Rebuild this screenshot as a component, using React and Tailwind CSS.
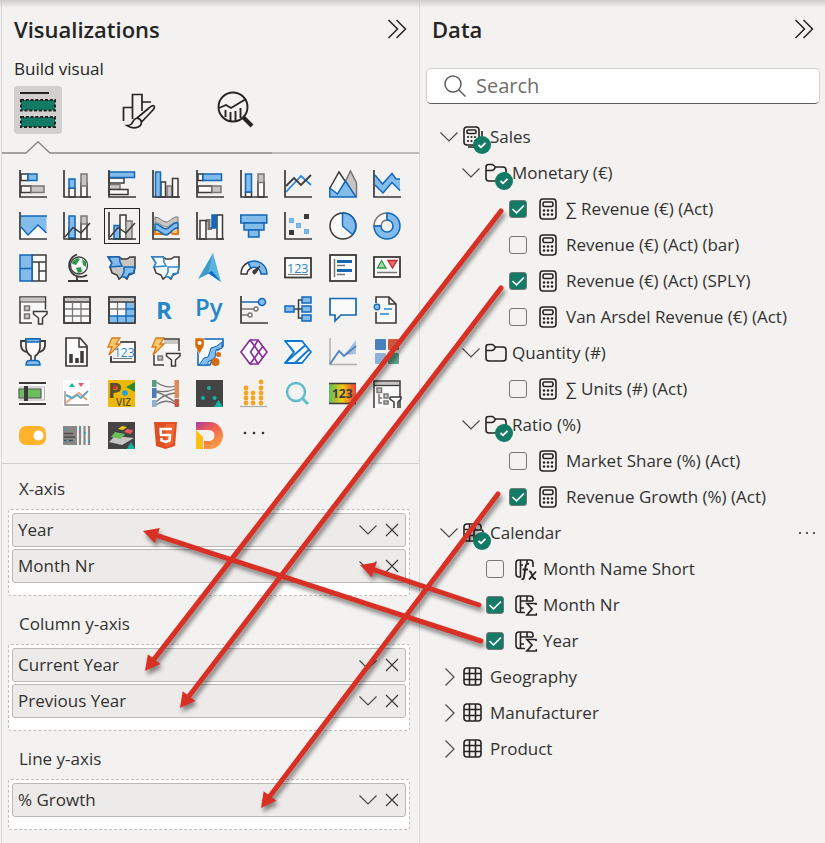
import React from 'react';

const D = '#3b3a39';
const B = '#1267b8';
const BF = '#83bceb';
const G = '#797775';
const GF = '#c8c6c4';
const W = '#fafafa';

const R = ({ x, y, w, h, f = W, s = D, sw = 1.5 }) => (
  <rect x={x} y={y} width={w} height={h} fill={f} stroke={s} strokeWidth={sw} />
);
const Axis = () => <path d="M1 0V27H28" fill="none" stroke={D} strokeWidth="1.7" />;
const L = ({ d, s = D, sw = 1.5, f = 'none' }) => (
  <path d={d} fill={f} stroke={s} strokeWidth={sw} />
);
const Bolt = () => (
  <path d="M4 0H12L8 6H12L1 17L4 9H0Z" fill="#fcc66d" stroke="#d87a1c" strokeWidth="1.3" />
);
const Funnel = () => (
  <path d="M14.5 15.5H28V18L23.5 22V28H19.5V22L14.5 18Z" fill={W} stroke={D} strokeWidth="1.5" />
);
const T = ({ x, y, size, fill, weight = 400, children }) => (
  <text x={x} y={y} fontSize={size} fill={fill} fontWeight={weight} fontFamily="'Open Sans', 'Noto Sans', sans-serif">
    {children}
  </text>
);

const visuals = [
  ['Stacked bar chart', <><R x={2} y={4} w={7} h={6.5} /><R x={2} y={16} w={10} h={6.5} /><R x={9} y={4} w={9} h={6.5} f={BF} s={B} /><R x={12} y={16} w={13} h={6.5} f={GF} s={G} /><Axis /></>],
  ['Stacked column chart', <><R x={6} y={18} w={6} h={9} /><R x={18} y={13} w={6} h={14} /><R x={6} y={9} w={6} h={9} f={BF} s={B} /><R x={18} y={4} w={6} h={12} f={GF} s={G} /><Axis /></>],
  ['Clustered bar chart', <><R x={1} y={8} w={15} h={5} /><R x={1} y={14.5} w={11} h={5} f={GF} s={G} /><R x={1} y={19.5} w={19} h={5} /><R x={1} y={2} w={25.5} h={5.5} f={BF} s={B} /><Axis /></>],
  ['Clustered column chart', <><R x={9} y={12} w={4.5} h={15} /><R x={15} y={16} w={5} h={11} f={GF} s={G} /><R x={20.5} y={8.5} w={5.5} h={18.5} /><R x={3.5} y={2} w={5} h={25} f={BF} s={B} /><Axis /></>],
  ['100% stacked bar chart', <><R x={2} y={4} w={5} h={6.5} /><R x={2} y={16} w={14} h={6.5} /><R x={7} y={4} w={18.5} h={6.5} f={BF} s={B} /><R x={16} y={16} w={9} h={6.5} f={GF} s={G} /><Axis /></>],
  ['100% stacked column chart', <><R x={5.5} y={22} w={6} h={5} /><R x={18} y={12} w={6} h={15} /><R x={5.5} y={4} w={6} h={18} f={BF} s={B} /><R x={18} y={4} w={6} h={8.5} f={GF} s={G} /><Axis /></>],
  ['Line chart', <><L d="M2 22L17 6L27 15" s="#2b88cf" sw={1.8} /><L d="M2 16L10 8L17 15L27 5" sw={1.8} /><Axis /></>],
  ['Area chart', <><path d="M1 26V17L10 2L19 17V26Z" fill={W} /><L d="M1 18L10 2L18 14" /><path d="M16 12L21.5 1L27.5 13V26H24Z" fill={GF} stroke={G} strokeWidth="1.5" /><path d="M.8 27V18L8.5 24L16.5 11L27 27Z" fill={BF} stroke={B} strokeWidth="1.5" /></>],
  ['Stacked area chart', <><path d="M2 5L9.5 14L19 3.5L23 9H27V21L19 12.5L10 23L2 15Z" fill={BF} /><L d="M2 5L9.5 14L19 3.5L23 9H27M27 20.5L19 12.5L10 23L2 15" s={B} /><Axis /></>],
  ['100% stacked area chart', <><path d="M2 4H27.500V27H2Z" fill={W} /><path d="M2 4H27.500V21L19 13L9 23L2 15Z" fill={BF} /><L d="M2 4H28M27.500 21L19 13L9 23L2 15" s={B} /><Axis /></>],
  ['Line and stacked column chart', <><R x={6} y={16} w={6} h={11} /><R x={18} y={11} w={6} h={16} /><R x={6} y={4} w={6} h={22} f={BF} s={B} /><R x={18} y={4} w={6} h={8} f={GF} s={G} /><L d="M2 25L10 15.500L18 21L27 11" /><Axis /></>],
  ['Line and clustered column chart', <><R x={6} y={13.500} w={6} h={13.500} f={BF} s={B} /><R x={12} y={3} w={6} h={24} /><R x={18} y={9} w={6} h={18} f={GF} s={G} /><L d="M2 25L10 15.500L18 21L27 11" /><Axis /></>],
  ['Ribbon chart', <><path d="M3 16H9L14 21L19 16H26V22H21L17 19L12 22H3Z" fill="#f6c38a" stroke="#e07b12" strokeWidth="2" /><path d="M3 5C8 5 10 10 14 10S21 4 26 5V10C20 10 18 15 14 15S8 10 3 11Z" fill={GF} stroke={G} /><path d="M3 12C8 11 9 17 14 17S20 9 26 11V16C20 15 19 23 14 23S8 17 3 18Z" fill={BF} stroke={B} strokeWidth="1.500" /><Axis /></>],
  ['Waterfall chart', <><path d="M10 8.500H13V16.500H16" fill="none" stroke={G} strokeWidth="3" /><R x={4} y={8.500} w={6} h={18.500} /><R x={21} y={3} w={5.500} h={24} /><R x={16} y={3} w={4} h={13} f={B} s={B} /><Axis /></>],
  ['Funnel chart', <><R x={.8} y={3} w={26} h={8} f={BF} s={B} /><R x={4} y={11} w={20} h={7} f={BF} s={B} /><R x={8.500} y={18} w={10.500} h={7} f={BF} s={B} /></>],
  ['Scatter chart', <><rect x="20" y="2" width="5" height="5" fill={D} /><rect x="5" y="18" width="5" height="5" fill={D} /><rect x="5.500" y="6.500" width="4" height="4" fill={BF} stroke="#6aaee6" /><rect x="12.500" y="11.500" width="4" height="4" fill={BF} stroke="#6aaee6" /><rect x="20.500" y="17.500" width="4" height="4" fill={BF} stroke="#6aaee6" /><Axis /></>],
  ['Pie chart', <><circle cx="14" cy="14" r="13" fill={W} stroke={D} strokeWidth="1.500" /><path d="M13.500 1A13 13 0 0 1 23.500 22.500L13.500 14Z" fill={BF} stroke={B} strokeWidth="1.500" /></>],
  ['Donut chart', <><path d="M1 14A13 13 0 0 1 14 1V8A6 6 0 0 0 8 14Z" fill={W} stroke={G} strokeWidth="1.500" /><path d="M14 1A13 13 0 1 1 1 14H8A6 6 0 1 0 14 8Z" fill={BF} stroke={B} strokeWidth="1.500" /></>],
  ['Treemap', <><R x={13} y={1} w={14} h={26} /><L d="M13 8H27M20 8V27M20 17H27" /><R x={1} y={1} w={12} h={26} f={BF} s={B} /><L d="M1 14.500H13" s={B} /></>],
  ['Map', <><circle cx="16" cy="11.500" r="8.500" fill={W} stroke={D} strokeWidth="1.300" /><path d="M9 8L14 4L17 5L15 8L13 11L9.500 10ZM13 14L18 13L19 18L15 19ZM19 5L23 8L23 13L20 11Z" fill="#2b9a48" /><L d="M14 .500A11.500 11.500 0 1 0 24 21M14 23V26M5 27H25" sw={1.800} /></>],
  ['Filled map', <><path d="M0 3H11L14 5H19L22 3H27V13L26 19L21 21L19 25L15 22L11 25L9 21L4 19L2 13L4 9Z" fill={GF} stroke={D} strokeWidth="1.500" /><path d="M.5 3H11.500L12 8L14 12L2 13L4 9Z" fill={BF} stroke={B} strokeWidth="1.500" /><path d="M16 13H27L25.500 19L21 20L19 24L14 22L16 18Z" fill={BF} stroke={B} strokeWidth="1.500" /></>],
  ['Shape map', <><path d="M0 3H11L14 5H19L22 3H27V13L26 19L21 21L19 25L15 22L11 25L9 21L4 19L2 13L4 9Z" fill={W} stroke={D} strokeWidth="1.500" /><path d="M.5 3H11.500L12 8L14 12L2 13L4 9Z" fill={W} stroke="#2b88cf" strokeWidth="1.500" /><path d="M16 13H27L25.500 19L21 20L19 24L14 22L16 18Z" fill={W} stroke="#2b88cf" strokeWidth="1.500" /></>],
  ['Azure map', <><path d="M17 -1L2 25L16 18Z" fill="#3f9bcb" /><path d="M17 -1L25 28L12 19Z" fill="#5ab4dc" /><path d="M12 19L16 17L25 28Z" fill="#0a6cc8" /></>],
  ['Gauge', <><path d="M1 20A13 13 0 0 1 8 8.500L11 14A7 7 0 0 0 7 20Z" fill={W} stroke={D} strokeWidth="1.500" /><path d="M8 8.500A13 13 0 0 1 27 20H21A7 7 0 0 0 11 14Z" fill={BF} stroke={B} strokeWidth="1.500" /><path d="M13 17L20 12L16 19Q14 21 13 19Z" fill={D} stroke={D} /></>],
  ['Card', <><R x={1} y={4} w={26} h={19.500} sw={1.800} /><T x={3} y={18.500} size={12.500} fill="#2b88cf">123</T><L d="M4 20.500H24" s={G} sw={1} /></>],
  ['Multi-row card', <><R x={1} y={1} w={26} h={26} sw={1.800} /><L d="M5.500 5V23" s={G} /><L d="M8 7.500H23M8 16.500H23" s={B} sw={2.800} /><L d="M8 11.500H16M8 20.500H16" s={G} /></>],
  ['KPI', <><R x={1} y={3} w={26} h={20} sw={1.800} /><path d="M4.500 14L8.500 6.500L13 14Z" fill="#a6dca9" stroke="#2b9a48" strokeWidth="1.300" /><path d="M15 6.500H24L19.500 14Z" fill="#e8706e" stroke="#c4262e" strokeWidth="1.300" /><L d="M4 18.500H24" s={G} /></>],
  ['Slicer', <><R x={1} y={1} w={25.500} h={26} /><rect x="1.500" y="1.500" width="24.500" height="4" fill={GF} /><L d="M1 6H26" sw={1} /><R x={5.500} y={10} w={5} h={4.500} f={GF} s={G} /><R x={5.500} y={18} w={5} h={4.500} f={GF} s={G} /><rect x="13" y="13.500" width="16" height="15" fill="#f3f2f1" /><Funnel /></>],
  ['Table', <><R x={1} y={1} w={26} h={26} /><rect x="1.500" y="1.500" width="25" height="4" fill={GF} /><L d="M1 6H27" /><L d="M1 13H27M1 20H27M9.500 6V27M18 6V27" s={G} sw={1.300} /><L d="M1 1H27V27H1Z" /></>],
  ['Matrix', <><R x={1} y={1} w={26} h={26} /><rect x="1.500" y="1.500" width="25" height="4" fill={GF} /><path d="M18 6H27V27H1V20H18Z" fill={BF} /><L d="M1 13H18M9.500 6V20" s={G} sw={1.300} /><L d="M18 6V27M1 20H27M18 13H27M9.500 20V27" s={B} sw={1.300} /><L d="M1 6H27M1 1H27V27H1Z" /></>],
  ['R script visual', <T x={4} y={23} size={24} weight={700} fill="#2786c8">R</T>],
  ['Python visual', <T x={-1} y={20} size={24} weight={600} fill="#2786c8">Py</T>],
  ['Key influencers', <><L d="M2 6H19" s={B} /><L d="M2 13H14M2 19H8" s={G} /><circle cx="22" cy="6" r="3.500" fill={BF} stroke={B} strokeWidth="1.500" /><circle cx="16" cy="13" r="2" fill={W} stroke={G} strokeWidth="1.500" /><circle cx="10" cy="19" r="2" fill={W} stroke={G} strokeWidth="1.500" /><Axis /></>],
  ['Decomposition tree', <><L d="M10 13H18M18 4H14.500V22H18" /><R x={1} y={10} w={9} h={6} f={BF} s={B} /><R x={18} y={1} w={9} h={6} f={BF} s={B} /><R x={18} y={10} w={9} h={6} f={BF} s={B} /><R x={18} y={19} w={9} h={6} f={BF} s={B} /></>],
  ['Q&A', <path d="M1 2.500H27V19H12L6 25V19H1Z" fill={W} stroke={B} strokeWidth="1.700" />],
  ['Smart narrative', <><path d="M3 1H16L23 8V27H3Z" fill={W} stroke={D} strokeWidth="1.600" /><L d="M16 1V8H23" /><rect x="1" y="7" width="6" height="9" fill="#f3f2f1" /><circle cx="4" cy="11" r="2.800" fill={BF} stroke={B} strokeWidth="1.300" /><L d="M11 13H19M7 18H16" s="#2b88cf" /></>],
  ['Metrics', <><L d="M7 3H2V8Q3 14 9 14M21 3H26V8Q25 14 19 14" sw={1.800} /><path d="M7 1H21V10Q20 16 16 18V23H12V18Q8 16 7 10Z" fill={W} stroke={D} strokeWidth="1.600" /><R x={7} y={1} w={14} h={3} f={BF} s={B} /><path d="M7 27Q7 22.500 11 22.500H17Q21 22.500 21 27Z" fill={BF} stroke={B} strokeWidth="1.500" /></>],
  ['Paginated report', <><path d="M3 0H17L24 8V28H3Z" fill={W} stroke={D} strokeWidth="1.700" /><L d="M16 0V9H24" /><L d="M8 16V25M14 20V25M19 13V25" sw={3.500} /></>],
  ['Card (new)', <><R x={3} y={4} w={24} h={20} sw={1.700} /><path d="M0 -1H14L11 7H13L8 13V20H-1Z" fill="#f3f2f1" /><T x={6} y={18.500} size={12} fill="#2b88cf">123</T><path d="M3 18V24" stroke={D} strokeWidth="1.700" /><L d="M5 20.500H24" s={G} sw={1} /><Bolt /></>],
  ['Slicer (new)', <><R x={2} y={1} w={25} h={26} /><rect x="3" y="2" width="23" height="4" fill={GF} /><rect x="0" y="-1" width="12" height="18" fill="#f3f2f1" /><R x={6} y={18} w={4.500} h={4} f={GF} s={G} /><Bolt /><rect x="12" y="13" width="18" height="17" fill="#f3f2f1" /><Funnel /></>],
  ['ArcGIS Maps', <><path d="M2 1H27V8L22 12L18 10L14 17L16 22L14 27H2Z" fill={W} stroke={B} strokeWidth="1.600" /><path d="M26 4V10L20 12L19 20L12 24V27H3L8 20L12 19L15 10L21 8Z" fill={BF} stroke={B} strokeWidth="1" /><path d="M-1 0H8V8L3.500 16L-1 8Z" fill="#d96b08" stroke="#fff" strokeWidth=".5" /><circle cx="3.500" cy="5" r="2" fill="#fff" /><circle cx="19.500" cy="24" r="4" fill="#d96b08" /><circle cx="22.500" cy="16.500" r="2.500" fill="#d96b08" /></>],
  ['Power Apps', <g fill={W} stroke="#882a99" strokeWidth="1.600" strokeLinejoin="round"><path d="M1 14L10 2H18L27 14L18 26H10Z" /><path d="M10 2L14.500 8L10.500 14L14.500 20L10 26" /><path d="M14.500 8L18 2M14.500 8L23 20M14.500 20L23 8M14.500 20L18 26" fill="none" /></g>],
  ['Power Automate', <g fill={W} stroke="#0b78d4" strokeWidth="1.800" strokeLinejoin="round"><path d="M1 3H18L27 14L18 25H1L10 14Z" /><path d="M21.500 7L1 25M25 11.500L11 25M10 14L6 9" fill="none" /></g>],
  ['Forecasting chart', <><path d="M1 0V26.500H28" fill="none" stroke="#b0afae" strokeWidth="1.500" /><path d="M15 17L27 2V16Z" fill="#a5c0df" /><path d="M1 26L10 13L15 18L27 8" fill="none" stroke="#5586bd" strokeWidth="2" /></>],
  ['Small multiples', <><rect x="2" y="1" width="11" height="11" rx="1" fill="#4a80bd" /><rect x="15" y="1" width="11" height="11" rx="1" fill="#c7573f" /><rect x="2" y="15" width="11" height="11" rx="1" fill="#8fb0d6" /><rect x="15" y="15" width="11" height="11" rx="1" fill="#5da28b" /></>],
  ['Bullet chart', <><rect x="0" y="3" width="27" height="20" fill={W} /><L d="M0 3H27M0 24H27" sw={1.800} /><path d="M0 7H25.500V20H0" fill="none" stroke="#b0afae" strokeWidth="1" /><rect x="0" y="9" width="22" height="9" fill="#6abf5c" stroke="#5c5b5a" strokeWidth="1.200" /><rect x="5" y="6" width="4" height="15" fill={D} /></>],
  ['Trend lines', <><rect width="27" height="27" fill="#fff" /><path d="M6 7L9 3L12 7Z" fill="#12b5a5" /><path d="M15 3H21L18 7Z" fill="#ec5a6a" /><path d="M3 23L10 17L16 13L24 20" fill="none" stroke="#f0a27d" strokeWidth="2" /><path d="M3 15L9 18L14 15L18 18L25 11" fill="none" stroke="#5ba8c6" strokeWidth="2" /><path d="M2 11V25H26" fill="none" stroke="#8a8886" strokeWidth="1.300" /></>],
  ['PViz', <><rect width="27" height="27" fill="#ecb90b" /><T x={0} y={18} size={22} weight={700} fill="#54502f">P</T><circle cx="7" cy="7.500" r="2" fill="#e32222" /><T x={8} y={25.500} size={10} weight={600} fill="#54502f">VIZ</T><circle cx="17" cy="13" r="2.800" fill="#1ba0e2" /><path d="M18 7L27 2V12Z" fill="#2b8a2b" /></>],
  ['Sankey chart', <><path d="M4 2Q14 9 23 6M4 11Q14 13 23 9M4 12Q12 14 23 22M4 22Q12 14 23 13M4 25Q14 18 23 24" fill="none" stroke="#797775" strokeWidth="1.300" /><rect width="4.500" height="7" fill="#5c9c86" /><rect y="8" width="4.500" height="10" fill="#4a7bb7" /><rect y="20" width="4.500" height="7" fill="#8fb0d6" /><rect x="22.500" width="4.500" height="18" fill="#e08a5a" /><rect x="22.500" y="19" width="4.500" height="8" fill="#c7573f" /></>],
  ['Scatter on dark', <><rect width="27" height="27" fill="#444" /><circle cx="13" cy="8" r="2" fill="#12b5a5" /><circle cx="7" cy="18" r="2" fill="#12b5a5" /><circle cx="18.500" cy="18" r="2" fill="#12b5a5" /><path d="M18 27L22.500 20L27 27Z" fill="#12b5a5" /></>],
  ['Dot plot', <><g fill="#f4a522">{[[6, 8], [6, 13], [6, 18], [6, 23], [13, 13], [13, 18], [13, 23], [21, 2], [21, 8], [21, 13], [21, 18], [21, 23]].map(([x, y]) => <circle key={`${x}-${y}`} cx={x} cy={y} r="2.400" />)}</g><L d="M0 26.500H27" s="#b0afae" sw={1.300} /></>],
  ['Text search', <><circle cx="12" cy="12" r="9" fill="none" stroke="#5fbccd" strokeWidth="2.500" /><path d="M18 18L24 24" stroke="#5fbccd" strokeWidth="3" /></>],
  ['Advanced card', <><defs><linearGradient id="heat"><stop offset="0" stopColor="#62bd5c" /><stop offset=".5" stopColor="#f2c811" /><stop offset="1" stopColor="#e8403a" /></linearGradient></defs><rect x="0" y="3" width="27" height="21" rx="1" fill="url(#heat)" /><L d="M0 3.500H27M0 23.500H27" sw={1.300} /><T x={3} y={18} size={12} weight={700} fill={D}>123</T></>],
  ['Hierarchy slicer', <><path d="M1 28V1H27V28" fill={W} stroke={D} strokeWidth="1.500" /><rect x="2" y="2" width="24" height="3" fill={GF} /><L d="M1 5.500H27" sw={1.300} /><R x={4} y={8} w={4.500} h={4.500} f={GF} s={G} /><R x={11} y={14} w={4} h={4} f={GF} s={G} /><L d="M6 14V18H9M6 18V23H9" s={G} /><R x={11} y={21} w={4} h={3} f={GF} s={G} /><path d="M17 17H28V19L25 22V28M21 28V22L17 19V17" fill={W} stroke={D} strokeWidth="1.500" /></>],
  ['Toggle', <><rect x="0" y="4" width="27" height="19" rx="7" fill="#ffb32c" /><circle cx="19.500" cy="13.500" r="5" fill="#fff" /></>],
  ['Text layout', <><rect y="4" width="14" height="19" fill="#8a8886" /><path d="M1 11.500H10M1 15H12M1 18.500H10" stroke="#4b4a49" strokeWidth="1.300" /><path d="M17 4V23M21.500 4V23M26 4V23" stroke="#8a8886" strokeWidth="2.200" /><path d="M1 7.500H3M3 18.500H6M21 11H23M25 19H27M16 7H18" stroke="#27a5c2" strokeWidth="1.500" /></>],
  ['Layered tiles', <><rect width="27" height="27" fill="#444" /><path d="M1 20L7 14L26 16L14 23Z" fill="#c8c6c4" /><path d="M3 15L7 10L17 12L13 17Z" fill="#6abf5c" /><path d="M10 7L14 4L19 5L15 8Z" fill="#f2c811" /><path d="M16 10L19 7L25 8L23 12Z" fill="#ec5a6a" /><path d="M19 27L23 20L27 27Z" fill="#12b5a5" /></>],
  ['HTML content', <><path d="M2 0H25L23 24L13.500 27L4 24Z" fill="#e04e26" /><path d="M13.500 2H23L21 22L13.500 25Z" fill="#ee6530" /><path d="M20 7H8.500L9 13H18L17.500 18.500L13.500 20L9.500 18.500V16" fill="none" stroke="#fff" strokeWidth="2.500" /></>],
  ['Drill down', <><defs><linearGradient id="dgrad" x1="0" y1="0" x2=".6" y2="1"><stop offset="0" stopColor="#a93b9c" /><stop offset=".45" stopColor="#f5614e" /><stop offset="1" stopColor="#ff9d45" /></linearGradient></defs><path d="M0 0H14A13 13.500 0 0 1 14 27H8V19H13A5.500 5.500 0 0 0 13 8H0Z" fill="url(#dgrad)" /><path d="M0 8L7 15V27H0Z" fill="#fdc010" /></>],
  ['More visuals', <g fill="#323130"><circle cx="5" cy="11" r="1.300" /><circle cx="14" cy="11" r="1.300" /><circle cx="23" cy="11" r="1.300" /></g>],
];

const ChevDown = () => (
  <svg className="h-[18px] w-[18px] shrink-0" viewBox="0 0 18 18" fill="none" stroke="#4b4a49" strokeWidth="1.2" aria-hidden="true">
    <path d="M.5 4.500L9 13L17.500 4.500" />
  </svg>
);
const ChevRight = () => (
  <svg className="h-[18px] w-[18px] shrink-0" viewBox="0 0 18 18" fill="none" stroke="#4b4a49" strokeWidth="1.2" aria-hidden="true">
    <path d="M5.500 .5L14 9L5.500 17.500" />
  </svg>
);
const DoubleChevron = () => (
  <svg className="h-[20px] w-[20px]" viewBox="0 0 20 20" fill="none" stroke="#252423" strokeWidth="1.5" aria-hidden="true">
    <path d="M1.500 1L10.500 10L1.500 19M9.500 1L18.500 10L9.500 19" />
  </svg>
);

const treeIcons = {
  measureGroup: <><rect x="1" y="1" width="15" height="18" rx="3" /><rect x="4" y="4" width="9" height="3.500" rx="1" /><path d="M19 5V18Q19 21 16 21H5" />{[5, 8.5, 12].map((x) => [11, 15].map((y) => <circle key={`${x}-${y}`} cx={x} cy={y} r="1.100" fill="#252423" stroke="none" />))}</>,
  folder: <path d="M1 8V5Q1 2.500 3.500 2.500H7.500L10.500 5H18Q21 5 21 8V16Q21 19 18 19H4Q1 19 1 16ZM1 8.500H7Q9 8.500 10.500 5" />,
  measure: <><rect x="2" y="1" width="16" height="20" rx="3" /><rect x="5" y="4" width="10" height="4.500" rx="1.500" />{[6, 10, 14].map((x) => [12.5, 16.5].map((y) => <circle key={`${x}-${y}`} cx={x} cy={y} r="1.300" fill="#252423" stroke="none" />))}</>,
  table: <><rect x="1" y="2" width="17" height="17" rx="3" /><path d="M6.500 2V19M12.500 2V19M1 7.500H18M1 13.500H18" /></>,
  dateTable: <><path d="M10 19H4Q1 19 1 16V5Q1 2 4 2H15Q18 2 18 5V7M6.500 2V19M12 2V8M1 7.500H11M1 13.500H10" /><rect x="11" y="8" width="9" height="9" rx="1.500" /></>,
  calcColumn: <><path d="M6 19H4Q1 19 1 16V5Q1 2 4 2H15Q18 2 18 5V9M5.500 2V19M12 2V5M5.500 7H8" /><path d="M14 6Q11 5 10.500 9L9 19Q8.500 22 6.500 21M7.500 11.500H13" strokeWidth="1.900" /><path d="M14 13.500Q16 13 17 17T21 21M21 13.500L14 21.500" strokeWidth="1.800" /></>,
  sumColumn: <><path d="M10 18.500H4Q1 18.500 1 15.500V5Q1 2 4 2H15Q18 2 18 5V7M5.500 2V18.500M12 2V7M5.500 7H18M5.500 14H9" /><path d="M21 11V9.500H12L17 15L12 21H21.500V19" strokeWidth="1.700" /></>,
};

const TreeIcon = ({ name, badge }) => (
  <span className="relative block h-[22px] w-[22px] shrink-0">
    <svg className="h-[22px] w-[22px]" viewBox="0 0 22 22" fill="none" stroke="#252423" strokeWidth="1.6" aria-hidden="true">
      {treeIcons[name]}
    </svg>
    {badge && (
      <svg className="absolute top-[10px] left-[10px] h-[18px] w-[18px]" viewBox="0 0 18 18" aria-hidden="true">
        <circle cx="9" cy="9" r="9" fill="#137a66" />
        <path d="M5.500 9L8 11.300L12.500 6.800" fill="none" stroke="#fff" strokeWidth="1.900" />
      </svg>
    )}
  </span>
);

function Branch({ level = 0, open = true, icon, badge, label, more }) {
  return (
    <div className={`flex h-9 items-center ${level === 0 ? 'pl-[20px]' : 'pl-[42px]'} pr-2`}>
      <button type="button" aria-expanded={open} className={`flex items-center text-left ${level === 0 ? 'gap-[5px]' : 'gap-[5px]'}`}>
        {open ? <ChevDown /> : <ChevRight />}
        <TreeIcon name={icon} badge={badge} />
        <span className="whitespace-nowrap">{label}</span>
      </button>
      {more && (
        <button type="button" aria-label="More options" className="ml-auto">
          <svg className="h-[18px] w-[20px]" viewBox="0 0 20 18" fill="#323130" aria-hidden="true">
            <circle cx="3" cy="9" r="1.100" /><circle cx="10" cy="9" r="1.100" /><circle cx="17" cy="9" r="1.100" />
          </svg>
        </button>
      )}
    </div>
  );
}

function Leaf({ icon, label, checked = false, column = false }) {
  return (
    <label className={`flex h-9 items-center gap-[11px] ${column ? 'pl-[66px]' : 'pl-[89px]'}`}>
      <span className="grid h-[18px] w-[18px] shrink-0">
        <input
          type="checkbox"
          defaultChecked={checked}
          className="peer col-start-1 row-start-1 h-[18px] w-[18px] appearance-none rounded-[3px] border border-[#797775] checked:bg-[#137a66]"
        />
        <svg className="pointer-events-none col-start-1 row-start-1 hidden h-[18px] w-[18px] peer-checked:block" viewBox="0 0 18 18" fill="none" stroke="#fff" strokeWidth="1.6" aria-hidden="true">
          <path d="M3.500 9L7.500 12.800L15 5.500" />
        </svg>
      </span>
      <span className="flex items-center gap-[6px]">
        <TreeIcon name={icon} />
        <span className="whitespace-nowrap">{label}</span>
      </span>
    </label>
  );
}

function Well({ title, fields }) {
  return (
    <section>
      <h3 className="flex h-10 items-center pl-[11px]">{title}</h3>
      <ul className="flex flex-col gap-[2px] rounded-[3px] border border-dashed border-[#c0bebc] bg-white px-[3px] pt-[3px] pb-[12px]">
        {fields.map((f) => (
          <li key={f} className="flex h-[34px] items-center gap-2 rounded-[3px] border border-[#bab8b6] bg-[#edebe9] pr-[6px] pl-[5px]">
            <span className="grow">{f}</span>
            <button type="button" aria-label={`${f} options`}><ChevDown /></button>
            <button type="button" aria-label={`Remove ${f}`}>
              <svg className="h-[14px] w-[14px]" viewBox="0 0 14 14" stroke="#3b3a39" strokeWidth="1.2" aria-hidden="true">
                <path d="M1 1L13 13M13 1L1 13" />
              </svg>
            </button>
          </li>
        ))}
      </ul>
    </section>
  );
}

const arrows = [
  [501, 211, 145, 671],
  [501, 288, 180, 708],
  [498, 494, 261, 808],
  [479, 605, 360, 565],
  [481, 641, 143, 531],
];

function Arrow({ from: [x1, y1], to: [x2, y2] }) {
  const len = Math.hypot(x2 - x1, y2 - y1);
  const ux = (x2 - x1) / len;
  const uy = (y2 - y1) / len;
  const bx = x2 - ux * 15;
  const by = y2 - uy * 15;
  return (
    <g>
      <line x1={x1} y1={y1} x2={bx} y2={by} stroke="#d93025" strokeWidth="5" strokeLinecap="round" />
      <polygon points={`${x2},${y2} ${bx - uy * 8},${by + ux * 8} ${bx + uy * 8},${by - ux * 8}`} fill="#d93025" />
    </g>
  );
}

export default function App() {
  return (
    <div className="relative flex min-h-screen bg-[#f3f2f1] font-['Open_Sans','Noto_Sans',sans-serif] text-[17px] leading-[22px] text-[#323130]">
      <div className="pointer-events-none absolute inset-x-0 top-0 h-[8px] bg-linear-to-b from-[#cfcdcc] to-transparent" />

      <section className="ml-px flex w-[419px] shrink-0 flex-col border-x border-x-[#dad9d8]">
        <header className="flex items-center justify-between pt-[14px] pr-[12px] pl-[12px] text-[#252423]">
          <h1 className="text-[22px] leading-[30px] font-semibold">Visualizations</h1>
          <button type="button" aria-label="Collapse Visualizations"><DoubleChevron /></button>
        </header>
        <h2 className="pt-[14px] pl-[12px] text-[17px] leading-[22px] font-medium text-[#252423]">Build visual</h2>
        <div className="flex gap-[50px] pt-[6px] pl-[12px]">
          <button type="button" aria-label="Build visual" className="rounded-[4px] bg-[#d2d0ce]">
            <svg className="h-12 w-12" viewBox="0 0 48 48" aria-hidden="true">
              <path d="M6 7H35" stroke="#252423" strokeWidth="2" />
              <g fill="#137a66" stroke="#252423" strokeWidth="2" strokeDasharray="3 1.800">
                <rect x="7" y="14" width="34" height="10.500" /><rect x="7" y="31" width="34" height="10" />
              </g>
            </svg>
          </button>
          <button type="button" aria-label="Format visual">
            <svg className="h-12 w-12" viewBox="0 0 48 48" fill="none" stroke="#252423" strokeWidth="1.700" aria-hidden="true">
              <path d="M11.500 35V21.500H20.500M20.500 33V8.500H30V25M30 16H39" />
              <path d="M42 20C41 19 39 20 37 22L25 32C27.500 32.500 29 34 29.500 36L40 25C42 23 43 21 42 20ZM25 32C21 33 21 36 19.500 38C18.500 39 17 39.500 15 39.500C20 43 29 43 29.500 36" fill="#f3f2f1" />
            </svg>
          </button>
          <button type="button" aria-label="Analytics">
            <svg className="h-12 w-12" viewBox="0 0 48 48" fill="none" stroke="#252423" strokeWidth="1.900" aria-hidden="true">
              <circle cx="23" cy="21" r="14.500" />
              <path d="M9 22L16 19L21 22L36 13M15.500 24V31M20.500 26V35M25.500 25V35M30.500 22V32" />
              <path d="M33 31L42 40" strokeWidth="4" />
            </svg>
          </button>
        </div>
        <div className="flex h-[21px] items-end">
          <svg className="h-[14px] w-[270px]" viewBox="0 0 270 14" fill="none" stroke="#8a8886" strokeWidth="1.500" aria-hidden="true">
            <path d="M0 12H24L36 .800L48 12H270" />
          </svg>
          <div className="mb-px h-[2px] grow bg-[#bebcba]" />
        </div>

        <div className="grid grid-cols-9 pt-[8px] pr-[10px] pb-[6px] pl-[9px]">
          {visuals.map(([name, art]) => (
            <button
              key={name}
              type="button"
              aria-label={name}
              className="flex h-[42px] items-center justify-center"
            >
              <span className={`flex h-9 w-9 items-center justify-center ${name === 'Line and clustered column chart' ? 'border border-[#252423]' : ''}`}>
                <svg className="h-7 w-7 shrink-0 overflow-visible" viewBox="0 0 28 28" aria-hidden="true">{art}</svg>
              </span>
            </button>
          ))}
        </div>

        <div className="flex flex-col gap-2 border-t border-[#d2d0ce] pt-[5px] pr-[9px] pb-[11px] pl-[6px]">
          <Well title="X-axis" fields={['Year', 'Month Nr']} />
          <Well title="Column y-axis" fields={['Current Year', 'Previous Year']} />
          <Well title="Line y-axis" fields={['% Growth']} />
        </div>
      </section>

      <section className="min-w-0 grow">
        <header className="flex items-center justify-between pt-[14px] pr-[11px] pl-[12px] text-[#252423]">
          <h1 className="text-[22px] leading-[30px] font-semibold">Data</h1>
          <button type="button" aria-label="Collapse Data"><DoubleChevron /></button>
        </header>
        <div className="pt-[24px] pr-[5px] pb-[15px] pl-[6px]">
          <label className="flex h-9 items-center gap-[10px] rounded-[5px] border border-[#d2d0ce] border-b-[#605e5c] bg-white pl-[17px]">
            <svg className="h-[22px] w-[22px] shrink-0" viewBox="0 0 22 22" fill="none" stroke="#605e5c" strokeWidth="1.500" aria-hidden="true">
              <circle cx="9" cy="9" r="8" /><path d="M15 15L21.500 21.500" />
            </svg>
            <input type="search" aria-label="Search" placeholder="Search" className="min-w-0 grow bg-transparent text-[20px] leading-[28px] outline-none placeholder:text-[#6f6d6b]" />
          </label>
        </div>
        <Branch icon="measureGroup" badge label="Sales" />
        <Branch level={1} icon="folder" badge label="Monetary (€)" />
        <Leaf icon="measure" checked label="∑ Revenue (€) (Act)" />
        <Leaf icon="measure" label="Revenue (€) (Act) (bar)" />
        <Leaf icon="measure" checked label="Revenue (€) (Act) (SPLY)" />
        <Leaf icon="measure" label="Van Arsdel Revenue (€) (Act)" />
        <Branch level={1} icon="folder" label="Quantity (#)" />
        <Leaf icon="measure" label="∑ Units (#) (Act)" />
        <Branch level={1} icon="folder" badge label="Ratio (%)" />
        <Leaf icon="measure" label="Market Share (%) (Act)" />
        <Leaf icon="measure" checked label="Revenue Growth (%) (Act)" />
        <Branch icon="dateTable" badge label="Calendar" more />
        <Leaf column icon="calcColumn" label="Month Name Short" />
        <Leaf column icon="sumColumn" checked label="Month Nr" />
        <Leaf column icon="sumColumn" checked label="Year" />
        <Branch open={false} icon="table" label="Geography" />
        <Branch open={false} icon="table" label="Manufacturer" />
        <Branch open={false} icon="table" label="Product" />
      </section>

      <svg className="pointer-events-none absolute top-0 left-0 h-[843px] w-[825px] drop-shadow-[2px_4px_2px_rgba(0,0,0,0.45)]" viewBox="0 0 825 843" aria-hidden="true">
        {arrows.map(([x1, y1, x2, y2]) => (
          <Arrow key={`${x1}-${y1}`} from={[x1, y1]} to={[x2, y2]} />
        ))}
      </svg>
    </div>
  );
}
